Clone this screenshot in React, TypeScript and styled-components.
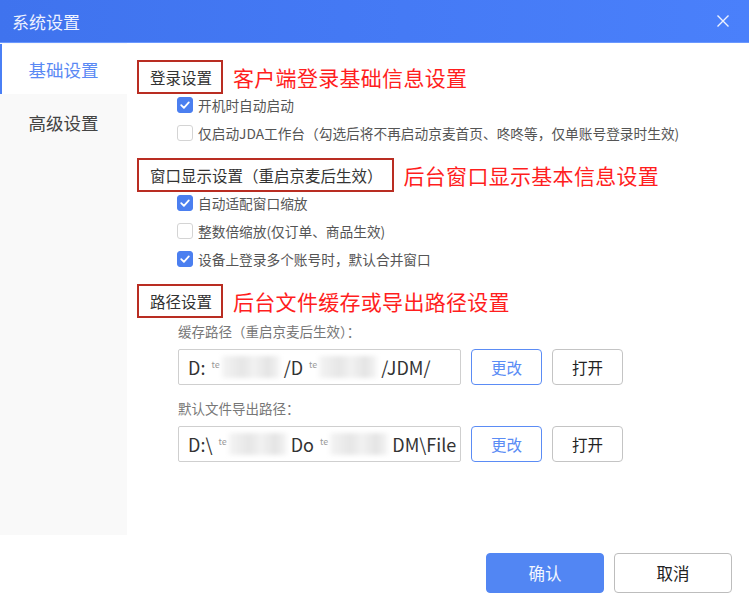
import React, { useState } from 'react';
import styled, { createGlobalStyle } from 'styled-components';

const GlobalStyle = createGlobalStyle`
  html, body {
    margin: 0;
    padding: 0;
    background: #ffffff;
  }
  body {
    font-family: "Noto Sans CJK SC", "Noto Sans", sans-serif;
  }
  * {
    box-sizing: border-box;
  }
`;

const Window = styled.div`
  width: 749px;
  height: 616px;
  display: flex;
  flex-direction: column;
  background: #fff;
  overflow: hidden;
`;

const TitleBar = styled.div`
  height: 43px;
  flex: none;
  display: flex;
  align-items: center;
  justify-content: space-between;
  padding: 0 14px 0 12px;
  background: linear-gradient(90deg, #3f73ee 0%, #4a80fb 100%);
  border-bottom: 1px solid #6a98ff;
`;

const Title = styled.span`
  color: #eef2ff;
  font-size: 17px;
`;

const CloseButton = styled.button`
  width: 24px;
  height: 24px;
  padding: 0;
  border: none;
  background: transparent;
  display: flex;
  align-items: center;
  justify-content: center;
  cursor: pointer;
`;

const Body = styled.div`
  flex: 1;
  display: flex;
  min-height: 0;
`;

const Sidebar = styled.div`
  width: 127px;
  flex: none;
  background: #f9f9f9;
  display: flex;
  flex-direction: column;
  padding-top: 1px;
`;

const NavItem = styled.div<{ $active?: boolean }>`
  height: ${(p) => (p.$active ? '50px' : '56px')};
  display: flex;
  align-items: center;
  justify-content: center;
  font-size: 17.5px;
  color: ${(p) => (p.$active ? '#5a89f4' : '#444')};
  background: ${(p) => (p.$active ? '#fff' : 'transparent')};
  border-left: 2px solid ${(p) => (p.$active ? '#4a7ff5' : 'transparent')};
  padding-right: 2px;
  cursor: pointer;
`;

const Content = styled.div`
  flex: 1;
  padding: 17px 0 0 10px;
  display: flex;
  flex-direction: column;
`;

const Section = styled.div`
  display: flex;
  flex-direction: column;
  margin-bottom: 14px;
`;

const SectionHead = styled.div`
  display: flex;
  align-items: center;
  gap: 10px;
`;

const HeadBox = styled.div`
  height: 34px;
  display: flex;
  align-items: center;
  padding: 0 9px 0 11px;
  border: 2px solid #b92d22;
  font-size: 15.5px;
  color: #333;
`;

const Note = styled.span`
  font-size: 21px;
  color: #ff1e1e;
  letter-spacing: 0.3px;
`;

const Options = styled.div`
  display: flex;
  flex-direction: column;
  gap: 6px;
  padding-left: 40px;
`;

const OptionRow = styled.label`
  height: 22px;
  display: flex;
  align-items: center;
  gap: 5px;
  font-size: 13.7px;
  color: #555;
  cursor: pointer;
`;

const Box = styled.span<{ $checked: boolean }>`
  width: 16px;
  height: 16px;
  flex: none;
  border-radius: 3px;
  display: flex;
  align-items: center;
  justify-content: center;
  background: ${(p) => (p.$checked ? '#4b7ff0' : '#fff')};
  border: 1px solid ${(p) => (p.$checked ? '#4b7ff0' : '#d4d4d4')};
`;

const PathBlock = styled.div`
  display: flex;
  flex-direction: column;
  padding-left: 41px;
`;

const FieldLabel = styled.div`
  height: 22px;
  display: flex;
  align-items: center;
  font-size: 13.5px;
  color: #777;
  margin-top: 2px;
`;

const FieldRow = styled.div`
  display: flex;
  align-items: center;
  gap: 10px;
  margin-top: 7px;
  margin-bottom: 10px;
`;

const PathInput = styled.div`
  width: 283px;
  height: 36px;
  border: 1px solid #cfcfcf;
  border-radius: 2px;
  display: flex;
  align-items: center;
  padding-left: 9px;
  font-size: 18px;
  color: #333;
  white-space: nowrap;
  overflow: hidden;
`;

const Tiny = styled.span`
  font-size: 9px;
  color: #999;
  margin: 0 2px 6px 6px;
`;

const Blur = styled.span<{ $w: number }>`
  display: inline-block;
  width: ${(p) => p.$w}px;
  height: 22px;
  background: linear-gradient(90deg, #f4f4f4 0%, #e6e6e6 35%, #f2f2f2 55%, #e4e4e4 80%, #f6f6f6 100%);
  filter: blur(2px);
  margin-right: 4px;
`;

const SmallButton = styled.button<{ $primary?: boolean }>`
  width: 71px;
  height: 36px;
  border-radius: 4px;
  background: #fff;
  border: 1px solid ${(p) => (p.$primary ? '#5b8cf5' : '#c4c4c4')};
  color: ${(p) => (p.$primary ? '#5b8cf5' : '#222')};
  font-family: inherit;
  font-size: 15.5px;
  cursor: pointer;
`;

const Footer = styled.div`
  height: 81px;
  flex: none;
  display: flex;
  justify-content: flex-end;
  align-items: flex-start;
  gap: 10px;
  padding: 18px 17px 0 0;
`;

const FooterButton = styled.button<{ $primary?: boolean }>`
  width: 118px;
  height: 40px;
  border-radius: 4px;
  font-family: inherit;
  font-size: 16.5px;
  cursor: pointer;
  background: ${(p) => (p.$primary ? '#5286f3' : '#fff')};
  color: ${(p) => (p.$primary ? '#f2f6ff' : '#222')};
  border: 1px solid ${(p) => (p.$primary ? '#5286f3' : '#bdbdbd')};
`;

const CheckMark = () => (
  <svg width="12" height="12" viewBox="0 0 12 12">
    <path d="M2.2 6.2 L4.9 8.8 L9.8 3.4" fill="none" stroke="#fff" strokeWidth="1.8" strokeLinecap="round" strokeLinejoin="round" />
  </svg>
);

type OptionProps = {
  label: string;
  initial: boolean;
};

function Option({ label, initial }: OptionProps) {
  const [checked, setChecked] = useState(initial);
  return (
    <OptionRow onClick={() => setChecked(!checked)}>
      <Box $checked={checked}>{checked && <CheckMark />}</Box>
      {label}
    </OptionRow>
  );
}

export default function App() {
  const [tab, setTab] = useState(0);

  return (
    <>
      <GlobalStyle />
      <Window>
        <TitleBar>
          <Title>系统设置</Title>
          <CloseButton aria-label="关闭">
            <svg width="14" height="14" viewBox="0 0 14 14">
              <path d="M1.5 1.5 L12.5 12.5 M12.5 1.5 L1.5 12.5" stroke="#eef2ff" strokeWidth="1.4" />
            </svg>
          </CloseButton>
        </TitleBar>
        <Body>
          <Sidebar>
            <NavItem $active={tab === 0} onClick={() => setTab(0)}>基础设置</NavItem>
            <NavItem $active={tab === 1} onClick={() => setTab(1)}>高级设置</NavItem>
          </Sidebar>
          <Content>
            <Section>
              <SectionHead>
                <HeadBox>登录设置</HeadBox>
                <Note>客户端登录基础信息设置</Note>
              </SectionHead>
              <Options>
                <Option label="开机时自动启动" initial={true} />
                <Option label="仅启动JDA工作台（勾选后将不再启动京麦首页、咚咚等，仅单账号登录时生效)" initial={false} />
              </Options>
            </Section>
            <Section>
              <SectionHead>
                <HeadBox>窗口显示设置（重启京麦后生效）</HeadBox>
                <Note>后台窗口显示基本信息设置</Note>
              </SectionHead>
              <Options>
                <Option label="自动适配窗口缩放" initial={true} />
                <Option label="整数倍缩放(仅订单、商品生效)" initial={false} />
                <Option label="设备上登录多个账号时，默认合并窗口" initial={true} />
              </Options>
            </Section>
            <Section>
              <SectionHead>
                <HeadBox>路径设置</HeadBox>
                <Note>后台文件缓存或导出路径设置</Note>
              </SectionHead>
              <PathBlock>
                <FieldLabel>缓存路径（重启京麦后生效）：</FieldLabel>
                <FieldRow>
                  <PathInput>
                    D:<Tiny>te</Tiny><Blur $w={58} />/D<Tiny>te</Tiny><Blur $w={58} />/JDM/
                  </PathInput>
                  <SmallButton $primary>更改</SmallButton>
                  <SmallButton>打开</SmallButton>
                </FieldRow>
                <FieldLabel>默认文件导出路径：</FieldLabel>
                <FieldRow>
                  <PathInput>
                    D:\<Tiny>te</Tiny><Blur $w={58} />Do<Tiny>te</Tiny><Blur $w={58} />DM\File
                  </PathInput>
                  <SmallButton $primary>更改</SmallButton>
                  <SmallButton>打开</SmallButton>
                </FieldRow>
              </PathBlock>
            </Section>
          </Content>
        </Body>
        <Footer>
          <FooterButton $primary>确认</FooterButton>
          <FooterButton>取消</FooterButton>
        </Footer>
      </Window>
    </>
  );
}
